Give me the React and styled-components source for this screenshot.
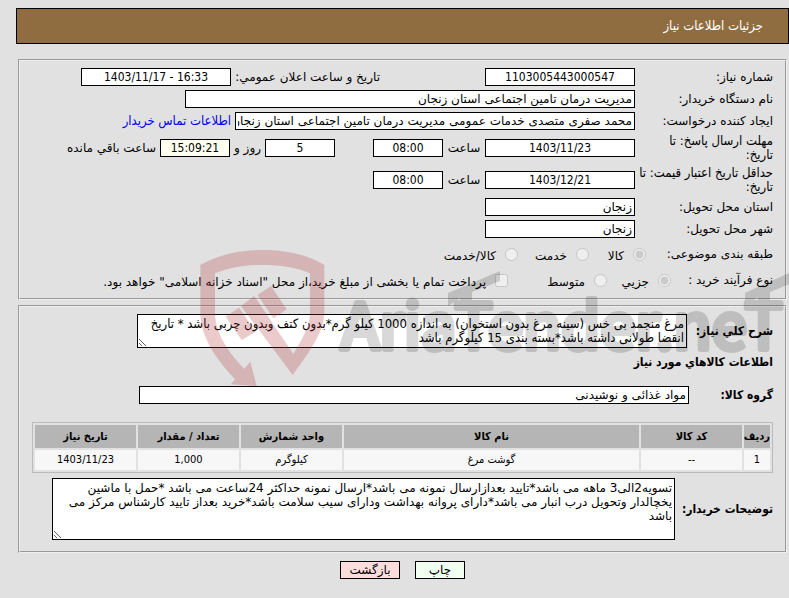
import styled, { createGlobalStyle, css } from 'styled-components'

const condensed='"DejaVu Sans Condensed", "DejaVu Sans", sans-serif'

const GlobalStyle=createGlobalStyle`
*{
    box-sizing: border-box;
}
body{
    margin: 0;
    background: #e1e1e1;
}
body, input, textarea, button{
    font-family: "DejaVu Sans", sans-serif;
    font-size: 12px;
    line-height: 14px;
    color: #000;
}
`
const compact=css`
font-family: ${condensed};
font-size: 13px;
`
const Page=styled.div`
position: relative;
overflow: hidden;
padding: 8px 0 18px 16px;
`
const Header=styled.h1`
${compact}
display: flex;
align-items: center;
height: 36px;
margin: 0 0 15px;
padding: 0 25px;
border: 1px solid #000;
background: #8f6d40;
color: #fff;
font-weight: normal;
`
const Panel=styled.section`
display: flex;
flex-direction: column;
gap: 4px;
margin: 0 2px 5px;
padding: 7px 12px ${props=>props.$bottom || 8}px;
border: 2px groove #eee;
`
const Row=styled.div`
display: flex;
align-items: center;
gap: 4px;
min-height: ${props=>props.$height || 18}px;
`
const Label=styled.label`
flex: none;
width: ${props=>props.$width || 134}px;
white-space: nowrap;
${props=>props.$compact && compact}
`
const BoldLabel=styled.label`
flex: none;
min-width: ${props=>props.$width || 0}px;
font-family: ${condensed};
font-weight: bold;
`
const Group=styled.div`
display: flex;
align-items: center;
gap: 4px;
flex: none;
width: ${props=>props.$width}px;
`
const Unit=styled.span`
flex: none;
min-width: ${props=>props.$width || 34}px;
text-align: center;
`
const boxed=css`
border: 1px solid #000;
border-radius: 0;
outline: none;
background: #fff;
`
const Field=styled.input`
${boxed}
flex: none;
width: ${props=>props.$width || 150}px;
height: 18px;
padding: 0 2px;
`
const NumberField=styled(Field).attrs({ dir: 'ltr' })`
background: ${props=>props.$ivory ? '#fffff0' : '#fff'};
font-family: ${condensed};
text-align: center;
`
const Link=styled.a`
${compact}
color: #0000ff;
text-decoration: none;
`
const Option=styled.label`
display: flex;
align-items: center;
gap: 9px;
flex: none;
min-width: ${props=>props.$width || 0}px;
`
const OptionText=styled.span`
padding-top: 3px;
`
const Tick=styled.input`
flex: none;
width: 13px;
height: 13px;
margin: 0;
`
const Options=styled.div`
display: flex;
align-items: center;
`
const Memo=styled.textarea`
${boxed}
flex: none;
width: ${props=>props.$width}px;
height: ${props=>props.$height}px;
padding: 2px;
overflow: hidden;
resize: both;
${props=>props.$compact && compact}
`
const Subtitle=styled.h2`
margin: 3px 0 13px;
font-family: ${condensed};
font-size: 12px;
`
const Table=styled.table`
width: 741px;
max-width: 100%;
margin: 14px 0 1px;
border: 1px solid #bbb;
border-spacing: 2px;
table-layout: fixed;
font-family: ${condensed};
font-size: 11px;
`
const Th=styled.th`
width: ${props=>props.$width ? props.$width+'px' : 'auto'};
height: 23px;
padding: 0;
background: #b5b5b5;
white-space: nowrap;
`
const Td=styled.td`
height: 20px;
padding: 0;
background: #f7f7f7;
text-align: center;
`
const Actions=styled.div`
display: flex;
justify-content: center;
gap: 15px;
padding-top: 3px;
`
const Button=styled.button`
${boxed}
width: ${props=>props.$width}px;
height: 18px;
padding: 0;
background: ${props=>props.$color};
`
const Watermark=styled.svg`
position: absolute;
top: 240px;
left: 190px;
direction: ltr;
pointer-events: none;
`
const SiteName=styled.text`
font-family: "Noto Sans CJK SC", sans-serif;
font-size: 63px;
stroke: #000;
stroke-width: 6px;
stroke-linejoin: round;
`

const columns=[
    { title: "رديف", width: 26 },
    { title: "كد كالا", width: 101 },
    { title: "نام كالا" },
    { title: "واحد شمارش", width: 101 },
    { title: "تعداد / مقدار", width: 101 },
    { title: "تاريخ نياز", width: 101 },
]
const items=[
    ["1", "--", "گوشت مرغ", "كيلوگرم", "1,000", "1403/11/23"],
]

const SiteMark = () => (
    <Watermark width="620" height="130" viewBox="0 0 620 130" overflow="visible" aria-hidden="true">
        <g transform="scale(0.3333)" fill="#b43237" opacity="0.25">
            <path d="M31 75C85 45 150 30 216 30C285 30 350 42 403 75V215C403 280 350 345 308 405L153 198L193 168L310 342C335 300 360 260 360 220V100C320 82 270 75 216 75C170 75 120 82 75 100V220C75 280 120 345 163 386L181 365L200 438L122 433L135 418C80 360 31 290 31 220Z" />
            <path d="M107 230L147 203L197 275L155 300Z" />
            <path d="M203 165L243 138L290 208L250 235Z" />
        </g>
        <g opacity="0.15">
            <SiteName x="151" y="109">AriaTender.neT</SiteName>
            <path d="M258 53L310 31V41L282 52V64H270V58L258 66Z" />
            <path d="M555 53L612 27V39L580 52V64H568V57L555 66Z" />
        </g>
    </Watermark>
)

const App = () => {
    return (
        <Page dir="rtl" lang="fa">
            <GlobalStyle/>
            <Header>جزئیات اطلاعات نیاز</Header>
            <Panel>
                <Row>
                    <Label htmlFor="number">شماره نیاز:</Label>
                    <Group $width={251}>
                        <NumberField id="number" readOnly defaultValue="1103005443000547" />
                    </Group>
                    <Label htmlFor="announced" $width={145}>تاریخ و ساعت اعلان عمومي:</Label>
                    <NumberField id="announced" readOnly defaultValue="1403/11/17 - 16:33" />
                </Row>
                <Row>
                    <Label htmlFor="buyer">نام دستگاه خریدار:</Label>
                    <Field id="buyer" $width={450} readOnly defaultValue="مدیریت درمان تامین اجتماعی استان زنجان" />
                </Row>
                <Row>
                    <Label htmlFor="creator">ایجاد کننده درخواست:</Label>
                    <Field id="creator" $width={400} readOnly defaultValue="محمد صفری متصدی خدمات عمومی مدیریت درمان تامین اجتماعی استان زنجان" />
                    <Link href="#contact">اطلاعات تماس خریدار</Link>
                </Row>
                <Row $height={28}>
                    <Label htmlFor="deadline" $compact>مهلت ارسال پاسخ: تا<br/>تاریخ:</Label>
                    <Group $width={296}>
                        <NumberField id="deadline" readOnly defaultValue="1403/11/23" />
                        <Unit>ساعت</Unit>
                        <NumberField aria-label="ساعت" $width={70} readOnly defaultValue="08:00" />
                    </Group>
                    <NumberField aria-label="روز" $width={70} readOnly defaultValue="5" />
                    <Unit $width={26}>روز و</Unit>
                    <NumberField aria-label="ساعت باقي مانده" $width={70} $ivory readOnly defaultValue="15:09:21" />
                    <Unit>ساعت باقي مانده</Unit>
                </Row>
                <Row $height={28}>
                    <Label htmlFor="validity" $compact>حداقل تاریخ اعتبار قیمت: تا<br/>تاریخ:</Label>
                    <NumberField id="validity" readOnly defaultValue="1403/12/21" />
                    <Unit>ساعت</Unit>
                    <NumberField aria-label="ساعت" $width={70} readOnly defaultValue="08:00" />
                </Row>
                <Row>
                    <Label htmlFor="province">استان محل تحویل:</Label>
                    <Field id="province" readOnly defaultValue="زنجان" />
                </Row>
                <Row>
                    <Label htmlFor="city">شهر محل تحویل:</Label>
                    <Field id="city" readOnly defaultValue="زنجان" />
                </Row>
                <Row $height={24}>
                    <Label as="span" $width={123}>طبقه بندی موضوعی:</Label>
                    <Options>
                        <Option $width={57}><Tick type="radio" name="kind" defaultChecked disabled /><OptionText>كالا</OptionText></Option>
                        <Option $width={71}><Tick type="radio" name="kind" disabled /><OptionText>خدمت</OptionText></Option>
                        <Option><Tick type="radio" name="kind" disabled /><OptionText>كالا/خدمت</OptionText></Option>
                    </Options>
                </Row>
                <Row $height={20}>
                    <Label as="span" $width={98}>نوع فرآیند خرید :</Label>
                    <Options>
                        <Option $width={64}><Tick type="radio" name="process" defaultChecked disabled /><OptionText>جزيي</OptionText></Option>
                        <Option $width={99}><Tick type="radio" name="process" disabled /><OptionText>متوسط</OptionText></Option>
                        <Option><Tick type="checkbox" disabled /><OptionText>پرداخت تمام یا بخشی از مبلغ خرید،از محل "اسناد خزانه اسلامی" خواهد بود.</OptionText></Option>
                    </Options>
                </Row>
            </Panel>
            <Panel $bottom={11}>
                <Row>
                    <BoldLabel htmlFor="summary" $width={82}>شرح كلي نياز:</BoldLabel>
                    <Memo id="summary" $width={550} $height={34} $compact readOnly defaultValue={"مرغ منجمد بی خس (سینه مرغ بدون استخوان) به اندازه 1000 کیلو گرم*بدون کتف وبدون چربی باشد * تاریخ انقضا طولانی داشته باشد*بسته بندی 15 کیلوگرم باشد"} />
                </Row>
                <Subtitle>اطلاعات كالاهاي مورد نياز</Subtitle>
                <Row>
                    <BoldLabel htmlFor="group" $width={80}>گروه كالا:</BoldLabel>
                    <Field id="group" $width={550} readOnly defaultValue="مواد غذائی و نوشیدنی" />
                </Row>
                <Table>
                    <thead>
                        <tr>
                            {columns.map((column)=>(
                                <Th key={column.title} $width={column.width}>{column.title}</Th>
                            ))}
                        </tr>
                    </thead>
                    <tbody>
                        {items.map((item)=>(
                            <tr key={item[0]}>
                                {item.map((value, index)=><Td key={index}>{value}</Td>)}
                            </tr>
                        ))}
                    </tbody>
                </Table>
                <Row>
                    <BoldLabel htmlFor="notes" $width={94}>توضيحات خريدار:</BoldLabel>
                    <Memo id="notes" $width={623} $height={62} readOnly defaultValue={"تسویه2الی3 ماهه می باشد*تایید بعدازارسال نمونه می باشد*ارسال نمونه حداکثر 24ساعت می باشد *حمل با ماشین یخچالدار وتحویل درب انبار می باشد*دارای پروانه بهداشت ودارای سیب سلامت باشد*خرید بعداز تایید کارشناس مرکز می باشد"} />
                </Row>
            </Panel>
            <Actions>
                <Button type="button" $width={50} $color="#f0fff0">چاپ</Button>
                <Button type="button" $width={60} $color="#ffdddd">بازگشت</Button>
            </Actions>
            <SiteMark/>
        </Page>
    )
}

export default App
